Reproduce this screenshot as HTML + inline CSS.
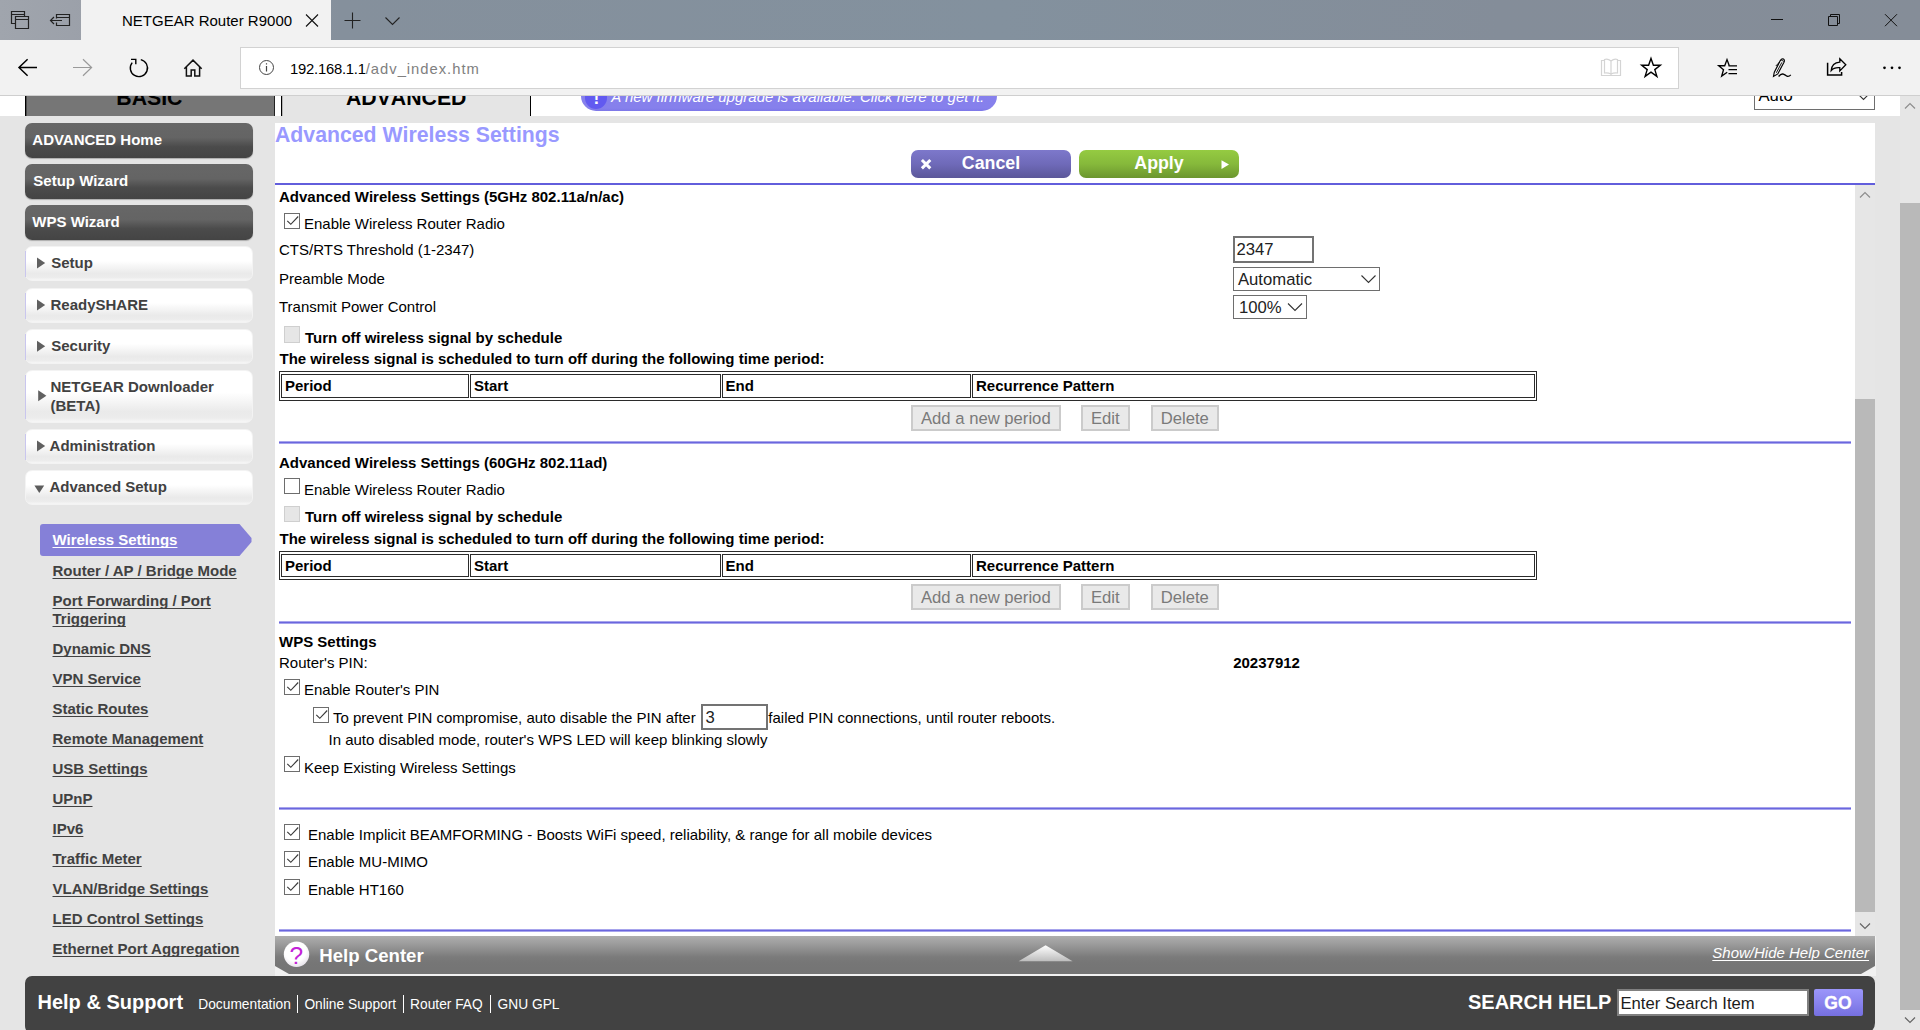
<!DOCTYPE html>
<html lang="en"><head><meta charset="utf-8"><title>NETGEAR Router R9000</title>
<style>
html,body{margin:0;padding:0}
body{width:1920px;height:1030px;overflow:hidden;position:relative;background:#e5e5e5;font-family:"Liberation Sans",sans-serif;}
div{box-sizing:border-box}
svg{position:absolute;left:0;top:0;overflow:visible}
.u{text-decoration:underline;text-decoration-skip-ink:none;text-underline-offset:2.4px;text-decoration-thickness:1.3px}
</style></head><body>

<div style="position:absolute;left:0px;top:0px;width:1920px;height:40px;background:linear-gradient(90deg,#a0a5ad 0,#9ba0a9 90px,#85909c 340px,#83919e 1000px,#848d99 1500px,#858d98 1920px)"></div>
<div style="position:absolute;left:81px;top:0px;width:250px;height:40px;background:#f2f2f2"></div>
<div style="position:absolute;left:122px;top:11px;font-size:15px;line-height:20px;font-weight:normal;color:#000;white-space:nowrap;">NETGEAR Router R9000</div>
<div style="position:absolute;left:0px;top:40px;width:1920px;height:56px;background:#f2f2f2"></div>
<div style="position:absolute;left:0px;top:95px;width:1920px;height:1px;background:#cfcfcf"></div>
<div style="position:absolute;left:240px;top:47px;width:1439px;height:42px;background:#fff;border:1px solid #d2d2d2"></div>
<div style="position:absolute;left:290px;top:60px;font-size:14.8px;line-height:19px;font-weight:normal;color:#000;white-space:nowrap;"><span style="color:#000;letter-spacing:-0.22px">192.168.1.1</span><span style="color:#808080;letter-spacing:0.98px">/adv_index.htm</span></div>
<svg width="1920" height="96" viewBox="0 0 1920 96" fill="none" stroke="#1a1a1a" stroke-width="1.2">
<!-- tabs aside -->
<g stroke="#222" stroke-width="1.2">
<path d="M15.5 23.5H11.5V11.5H24.5V16.5M11.5 14.5H24.5"/>
<path d="M15.5 16.5H28.5V28.5H15.5ZM15.5 19.5H28.5"/>
<path d="M56.5 18.5V14.5H69.5V25.5H56.5V22.5M56.5 17.5H69.5"/>
<path d="M62 20.5H50.5M54 17L50.5 20.5L54 24"/>
</g>
<!-- tab close, plus, chevron -->
<path d="M306 14.5L318 26.5M318 14.5L306 26.5" stroke="#111" stroke-width="1.1"/>
<path d="M344.5 20.5H360.5M352.5 12.5V28.5" stroke="#222" stroke-width="1.1"/>
<path d="M385.5 17.5L392.5 24.5L399.5 17.5" stroke="#222" stroke-width="1.1"/>
<!-- window controls -->
<path d="M1771 19.5H1783" stroke="#111" stroke-width="1"/>
<path d="M1828.5 16.5H1837.5V25.5H1828.5ZM1830.5 16.5V14.5H1839.5V23.5H1837.5" stroke="#111" stroke-width="1"/>
<path d="M1885 14.2L1897 26.2M1897 14.2L1885 26.2" stroke="#111" stroke-width="1"/>
<!-- back -->
<path d="M37 67.5H19M27.6 59.2L19 67.5L27.6 75.8" stroke="#000" stroke-width="1.5"/>
<!-- forward -->
<path d="M73 67.5H91.5M83 59.2L91.6 67.5L83 75.8" stroke="#9a9a9a" stroke-width="1.2"/>
<!-- refresh -->
<path d="M140.8 59.6A8.6 8.6 0 1 1 132.2 62.6" stroke="#000" stroke-width="1.4"/>
<path d="M131 59.4H135.8V64.2" stroke="#000" stroke-width="1.4"/>
<!-- home -->
<path d="M184.3 68.7L193 60.1L201.7 68.7M186.4 67V76H191.2V70H194.8V76H199.6V67" stroke="#111" stroke-width="1.5"/>
<!-- info -->
<circle cx="266.5" cy="67.5" r="7" stroke="#444" stroke-width="1"/>
<path d="M266.5 66V71.5M266.5 63.2V64.6" stroke="#444" stroke-width="1.2"/>
<!-- reading view (disabled) -->
<path d="M1604.5 60.5H1601.5V75.5H1620.5V60.5H1617.5M1611 61V75.5M1604.500 73V59.500Q1608 58.500 1611 61Q1614 58.500 1617.500 59.500V73Q1614 72.500 1611 74Q1608 72.500 1604.500 73Z" stroke="#d4d4d4" stroke-width="1.2"/>
<!-- star -->
<path d="M1651 58.4L1653.400 65.300H1660.300L1654.800 69.600L1656.900 76.400L1651 72.200L1645.100 76.400L1647.200 69.600L1641.700 65.300H1648.600Z" stroke="#000" stroke-width="1.4"/>
<!-- favorites hub -->
<path d="M1729.300 65.700L1727 59.600L1724.700 65.700H1718.700L1723.500 69.700L1721.700 76L1727.200 72.200" stroke="#000" stroke-width="1.35"/>
<path d="M1728.500 65.800H1737M1728.500 69.700H1737M1728.500 73.600H1737" stroke="#000" stroke-width="1.3"/>
<!-- pen -->
<path d="M1773.500 76.400L1774.300 72.200L1780.300 60.600Q1781.700 58.200 1783.500 59.100Q1785 60.100 1784 62.200L1777.800 73.900Z" stroke="#000" stroke-width="1.15"/>
<path d="M1779.600 62L1775.800 66M1781.900 62.300L1776.300 72.800M1781.200 60L1783.800 61.400" stroke="#000" stroke-width="0.9"/>
<path d="M1778.600 76.500Q1781.200 73.300 1783.400 74.200Q1785.500 75.300 1787 76.200Q1789 76.800 1790.800 74.900" stroke="#000" stroke-width="1.3"/>
<!-- share -->
<path d="M1827.600 62.800V75H1841.600V72" stroke="#000" stroke-width="1.5"/>
<path d="M1839.800 58.800L1845.800 64.800L1839.800 70.900V67.700Q1834 67.200 1831.200 70.600Q1831.800 62.800 1839.800 62.200Z" stroke="#000" stroke-width="1.3"/>
<!-- more -->
<g fill="#000" stroke="none"><circle cx="1884.500" cy="67.800" r="1.350"/><circle cx="1892" cy="67.800" r="1.350"/><circle cx="1899.500" cy="67.800" r="1.350"/></g>
</svg>
<div style="position:absolute;left:0px;top:96px;width:1900px;height:20px;background:#fff"></div>
<div style="position:absolute;left:25px;top:96px;width:250px;height:20px;background:#767676;border-left:1px solid #000;border-right:1px solid #222"></div>
<div style="position:absolute;left:26px;top:96px;width:1px;height:20px;background:#4c4c4c"></div>
<div style="position:absolute;left:0;top:96px;width:1900px;height:20px;overflow:hidden">
<div style="position:absolute;left:281px;top:0;width:250px;height:20px;background:#e5e5e5;border-left:1px solid #000;border-right:1px solid #000"></div><div style="position:absolute;left:282px;top:0;width:1px;height:20px;background:#b4b4b4"></div>
<div style="position:absolute;left:116.3px;top:-12px;font-size:21.25px;line-height:28px;font-weight:bold;color:#000;white-space:nowrap;font-kerning:none">BASIC</div>
<div style="position:absolute;left:346px;top:-12px;font-size:21.25px;line-height:28px;font-weight:bold;color:#000;white-space:nowrap;font-kerning:none">ADVANCED</div>
<div style="position:absolute;left:581px;top:-15px;width:416px;height:30px;border-radius:15px;background:linear-gradient(180deg,#8781ec 0,#8680ec 90%,#7d77e8 100%)"></div>
<div style="position:absolute;left:584.9px;top:-10.1px;width:22.6px;height:22.6px;border-radius:50%;background:#625af0"></div>
<div style="position:absolute;left:593.6px;top:-9px;font-size:17.5px;line-height:23px;font-weight:bold;color:#fff;white-space:nowrap;">!</div>
<div style="position:absolute;left:611.3px;top:-9px;font-size:15px;line-height:20px;font-weight:normal;color:#fff;white-space:nowrap;font-style:italic">A new firmware upgrade is available. Click here to get it.</div>
<div style="position:absolute;left:1754px;top:-10px;width:121px;height:24px;background:#fff;border:1px solid #6e6e6e"></div>
<div style="position:absolute;left:1758.5px;top:-11px;font-size:16.67px;line-height:22px;font-weight:normal;color:#000;white-space:nowrap;">Auto</div>
<svg width="1900" height="20" viewBox="0 96 1900 20" fill="none"><path d="M1856.500 92.500L1863.500 99.500L1870.500 92.500" stroke="#333" stroke-width="1.1"/></svg>
</div>
<div style="position:absolute;left:1900px;top:96px;width:20px;height:934px;background:#e6e6e6"></div>
<div style="position:absolute;left:1900px;top:203px;width:20px;height:807px;background:#b9b9b9"></div>
<svg width="1920" height="1030" viewBox="0 0 1920 1030" fill="none" stroke="#8e8e8e" stroke-width="1.2"><path d="M1905 108.500L1910 103.500L1915 108.500"/><path d="M1905 1017.500L1910 1022.500L1915 1017.500" stroke="#666"/></svg>
<div style="position:absolute;left:25px;top:123px;width:228px;height:35px;border-radius:7px;background:linear-gradient(180deg,#676767 0,#646464 42%,#4b4b4b 68%,#444 100%);box-shadow:0 1px 1px rgba(0,0,0,.25)"></div>
<div style="position:absolute;left:32.3px;top:130px;font-size:15px;line-height:20px;font-weight:bold;color:#fff;white-space:nowrap;">ADVANCED Home</div>
<div style="position:absolute;left:25px;top:164px;width:228px;height:35px;border-radius:7px;background:linear-gradient(180deg,#676767 0,#646464 42%,#4b4b4b 68%,#444 100%);box-shadow:0 1px 1px rgba(0,0,0,.25)"></div>
<div style="position:absolute;left:33.3px;top:171px;font-size:15px;line-height:20px;font-weight:bold;color:#fff;white-space:nowrap;">Setup Wizard</div>
<div style="position:absolute;left:25px;top:205px;width:228px;height:35px;border-radius:7px;background:linear-gradient(180deg,#676767 0,#646464 42%,#4b4b4b 68%,#444 100%);box-shadow:0 1px 1px rgba(0,0,0,.25)"></div>
<div style="position:absolute;left:32.3px;top:212px;font-size:15px;line-height:20px;font-weight:bold;color:#fff;white-space:nowrap;">WPS Wizard</div>
<div style="position:absolute;left:25px;top:246px;width:228px;height:35px;border-radius:7px;border:1px solid #f3f3f3;background:linear-gradient(180deg,#fff 0,#fff 42%,#eaeaea 80%,#ececec 92%,#f6f6f6 100%)"></div>
<div style="position:absolute;left:25px;top:251px;width:1px;height:26px;background:#c9c6ee"></div>
<div style="position:absolute;left:51.2px;top:253px;font-size:15px;line-height:20px;font-weight:bold;color:#414141;white-space:nowrap;">Setup</div>
<svg width="300" height="600" viewBox="0 0 300 600"><path d="M37 257.6L45.2 263.1L37 268.6Z" fill="#606060"/></svg>
<div style="position:absolute;left:25px;top:288px;width:228px;height:35px;border-radius:7px;border:1px solid #f3f3f3;background:linear-gradient(180deg,#fff 0,#fff 42%,#eaeaea 80%,#ececec 92%,#f6f6f6 100%)"></div>
<div style="position:absolute;left:25px;top:293px;width:1px;height:26px;background:#c9c6ee"></div>
<div style="position:absolute;left:50.5px;top:295px;font-size:15px;line-height:20px;font-weight:bold;color:#414141;white-space:nowrap;">ReadySHARE</div>
<svg width="300" height="600" viewBox="0 0 300 600"><path d="M37 299.5L45.2 305L37 310.5Z" fill="#606060"/></svg>
<div style="position:absolute;left:25px;top:329px;width:228px;height:35px;border-radius:7px;border:1px solid #f3f3f3;background:linear-gradient(180deg,#fff 0,#fff 42%,#eaeaea 80%,#ececec 92%,#f6f6f6 100%)"></div>
<div style="position:absolute;left:25px;top:334px;width:1px;height:26px;background:#c9c6ee"></div>
<div style="position:absolute;left:51.2px;top:336px;font-size:15px;line-height:20px;font-weight:bold;color:#414141;white-space:nowrap;">Security</div>
<svg width="300" height="600" viewBox="0 0 300 600"><path d="M37 340.7L45.2 346.2L37 351.7Z" fill="#606060"/></svg>
<div style="position:absolute;left:25px;top:370px;width:228px;height:53px;border-radius:7px;border:1px solid #f3f3f3;background:linear-gradient(180deg,#fff 0,#fff 42%,#eaeaea 80%,#ececec 92%,#f6f6f6 100%)"></div>
<div style="position:absolute;left:25px;top:375px;width:1px;height:44px;background:#c9c6ee"></div>
<div style="position:absolute;left:50.5px;top:377px;font-size:15px;line-height:20px;font-weight:bold;color:#414141;white-space:nowrap;">NETGEAR Downloader</div>
<div style="position:absolute;left:50.5px;top:396px;font-size:15px;line-height:20px;font-weight:bold;color:#414141;white-space:nowrap;">(BETA)</div>
<svg width="300" height="600" viewBox="0 0 300 600"><path d="M38.2 390.2L46.400000000000006 395.7L38.2 401.2Z" fill="#606060"/></svg>
<div style="position:absolute;left:25px;top:429px;width:228px;height:35px;border-radius:7px;border:1px solid #f3f3f3;background:linear-gradient(180deg,#fff 0,#fff 42%,#eaeaea 80%,#ececec 92%,#f6f6f6 100%)"></div>
<div style="position:absolute;left:25px;top:434px;width:1px;height:26px;background:#c9c6ee"></div>
<div style="position:absolute;left:49.6px;top:436px;font-size:15px;line-height:20px;font-weight:bold;color:#414141;white-space:nowrap;">Administration</div>
<svg width="300" height="600" viewBox="0 0 300 600"><path d="M37 440.5L45.2 446L37 451.5Z" fill="#606060"/></svg>
<div style="position:absolute;left:25px;top:470px;width:228px;height:35px;border-radius:7px;border:1px solid #f3f3f3;background:linear-gradient(180deg,#fff 0,#fff 42%,#eaeaea 80%,#ececec 92%,#f6f6f6 100%)"></div>
<div style="position:absolute;left:49.4px;top:477px;font-size:15px;line-height:20px;font-weight:bold;color:#414141;white-space:nowrap;">Advanced Setup</div>
<svg width="300" height="600" viewBox="0 0 300 600"><path d="M34.4 485.4H44.2L39.3 493Z" fill="#5c5c5c"/></svg>
<svg width="300" height="600" viewBox="0 0 300 600"><path d="M43 524H239.500L251.500 538V542L239.500 556H43Q40 556 40 553V527Q40 524 43 524Z" fill="#8580d8"/></svg>
<div class="u" style="position:absolute;left:52.5px;top:530px;font-size:15px;line-height:20px;font-weight:bold;color:#fff;white-space:nowrap;">Wireless Settings</div>
<div class="u" style="position:absolute;left:52.5px;top:561px;font-size:15px;line-height:20px;font-weight:bold;color:#414141;white-space:nowrap;">Router / AP / Bridge Mode</div>
<div class="u" style="position:absolute;left:52.5px;top:591px;font-size:15px;line-height:20px;font-weight:bold;color:#414141;white-space:nowrap;">Port Forwarding / Port</div>
<div class="u" style="position:absolute;left:52.5px;top:609px;font-size:15px;line-height:20px;font-weight:bold;color:#414141;white-space:nowrap;">Triggering</div>
<div class="u" style="position:absolute;left:52.5px;top:639px;font-size:15px;line-height:20px;font-weight:bold;color:#414141;white-space:nowrap;">Dynamic DNS</div>
<div class="u" style="position:absolute;left:52.5px;top:669px;font-size:15px;line-height:20px;font-weight:bold;color:#414141;white-space:nowrap;">VPN Service</div>
<div class="u" style="position:absolute;left:52.5px;top:699px;font-size:15px;line-height:20px;font-weight:bold;color:#414141;white-space:nowrap;">Static Routes</div>
<div class="u" style="position:absolute;left:52.5px;top:729px;font-size:15px;line-height:20px;font-weight:bold;color:#414141;white-space:nowrap;">Remote Management</div>
<div class="u" style="position:absolute;left:52.5px;top:759px;font-size:15px;line-height:20px;font-weight:bold;color:#414141;white-space:nowrap;">USB Settings</div>
<div class="u" style="position:absolute;left:52.5px;top:789px;font-size:15px;line-height:20px;font-weight:bold;color:#414141;white-space:nowrap;">UPnP</div>
<div class="u" style="position:absolute;left:52.5px;top:819px;font-size:15px;line-height:20px;font-weight:bold;color:#414141;white-space:nowrap;">IPv6</div>
<div class="u" style="position:absolute;left:52.5px;top:849px;font-size:15px;line-height:20px;font-weight:bold;color:#414141;white-space:nowrap;">Traffic Meter</div>
<div class="u" style="position:absolute;left:52.5px;top:879px;font-size:15px;line-height:20px;font-weight:bold;color:#414141;white-space:nowrap;">VLAN/Bridge Settings</div>
<div class="u" style="position:absolute;left:52.5px;top:909px;font-size:15px;line-height:20px;font-weight:bold;color:#414141;white-space:nowrap;">LED Control Settings</div>
<div class="u" style="position:absolute;left:52.5px;top:939px;font-size:15px;line-height:20px;font-weight:bold;color:#414141;white-space:nowrap;">Ethernet Port Aggregation</div>
<div style="position:absolute;left:275px;top:123px;width:1600px;height:813px;background:#fff"></div>
<div style="position:absolute;left:275px;top:121px;font-size:21.25px;line-height:28px;font-weight:bold;color:#9999ff;white-space:nowrap;font-kerning:none">Advanced Wireless Settings</div>
<div style="position:absolute;left:911px;top:150px;width:160px;height:28px;border-radius:7px;background:linear-gradient(180deg,#7d78cb 0,#6f6ab9 50%,#5b5799 100%)"></div>
<div style="position:absolute;left:961.8px;top:152px;font-size:17.8px;line-height:23px;font-weight:bold;color:#fff;white-space:nowrap;">Cancel</div>
<div style="position:absolute;left:1079px;top:150px;width:160px;height:28px;border-radius:7px;background:linear-gradient(180deg,#95cb42 0,#86b93b 50%,#6b962e 100%)"></div>
<div style="position:absolute;left:1134.3px;top:152px;font-size:17.8px;line-height:23px;font-weight:bold;color:#fff;white-space:nowrap;">Apply</div>
<svg width="1920" height="300" viewBox="0 0 1920 300"><path d="M921.900 160L930.300 168.400M930.300 160L921.900 168.400" stroke="#fff" stroke-width="3"/><path d="M1221.500 160.200L1229 164.600L1221.500 169Z" fill="#fff"/></svg>
<div style="position:absolute;left:275px;top:183px;width:1600px;height:2px;background:#625edc"></div>
<div style="position:absolute;left:1855px;top:185px;width:20px;height:751px;background:#e6e6e6"></div>
<div style="position:absolute;left:1855px;top:399px;width:20px;height:513px;background:#b9b9b9"></div>
<svg width="1920" height="1030" viewBox="0 0 1920 1030" fill="none" stroke="#8e8e8e" stroke-width="1.2"><path d="M1860 197.500L1865 192.500L1870 197.500"/><path d="M1860 923.500L1865 928.500L1870 923.500" stroke="#666"/></svg>
<div style="position:absolute;left:279px;top:187px;font-size:15px;line-height:20px;font-weight:bold;color:#000;white-space:nowrap;">Advanced Wireless Settings (5GHz 802.11a/n/ac)</div>
<div style="position:absolute;left:284px;top:213px;width:16px;height:16px;background:#fff;border:1px solid #6d6d6d"></div>
<svg width="1920" height="1030" viewBox="0 0 1920 1030" fill="none"><path d="M287.3 220.8L290.8 224.3L298.2 216.5" stroke="#3a3a3a" stroke-width="1.15"/></svg>
<div style="position:absolute;left:304px;top:214px;font-size:15px;line-height:20px;font-weight:normal;color:#000;white-space:nowrap;">Enable Wireless Router Radio</div>
<div style="position:absolute;left:279px;top:240px;font-size:15px;line-height:20px;font-weight:normal;color:#000;white-space:nowrap;">CTS/RTS Threshold (1-2347)</div>
<div style="position:absolute;left:1233px;top:236px;width:81px;height:27px;background:#fff;border:2px solid #737373"></div>
<div style="position:absolute;left:1236.5px;top:239px;font-size:16.67px;line-height:22px;font-weight:normal;color:#222;white-space:nowrap;">2347</div>
<div style="position:absolute;left:279px;top:269px;font-size:15px;line-height:20px;font-weight:normal;color:#000;white-space:nowrap;">Preamble Mode</div>
<div style="position:absolute;left:1233px;top:267px;width:147px;height:24px;background:#fff;border:1px solid #6e6e6e"></div>
<div style="position:absolute;left:1238px;top:269px;font-size:16.67px;line-height:22px;font-weight:normal;color:#222;white-space:nowrap;">Automatic</div>
<div style="position:absolute;left:279px;top:297px;font-size:15px;line-height:20px;font-weight:normal;color:#000;white-space:nowrap;">Transmit Power Control</div>
<div style="position:absolute;left:1233px;top:295px;width:74px;height:24px;background:#fff;border:1px solid #6e6e6e"></div>
<div style="position:absolute;left:1239px;top:297px;font-size:16.67px;line-height:22px;font-weight:normal;color:#222;white-space:nowrap;">100%</div>
<svg width="1920" height="400" viewBox="0 0 1920 400" fill="none" stroke="#333" stroke-width="1.1"><path d="M1361.500 275.500L1368.500 282.500L1375.500 275.500"/><path d="M1288 303.500L1295 310.500L1302 303.500"/></svg>
<div style="position:absolute;left:284px;top:326px;width:16px;height:17px;background:#e6e6e6;border:1px solid #cfcfcf"></div>
<div style="position:absolute;left:305px;top:328px;font-size:15px;line-height:20px;font-weight:bold;color:#000;white-space:nowrap;">Turn off wireless signal by schedule</div>
<div style="position:absolute;left:279.5px;top:349px;font-size:15px;line-height:20px;font-weight:bold;color:#000;white-space:nowrap;">The wireless signal is scheduled to turn off during the following time period:</div>
<div style="position:absolute;left:279px;top:371px;width:1258px;height:30px;border:1px solid #2b2b2b"></div>
<div style="position:absolute;left:281px;top:374px;width:188px;height:24px;border:1px solid #2b2b2b"></div>
<div style="position:absolute;left:285px;top:376px;font-size:15px;line-height:20px;font-weight:bold;color:#000;white-space:nowrap;">Period</div>
<div style="position:absolute;left:470px;top:374px;width:250.5px;height:24px;border:1px solid #2b2b2b"></div>
<div style="position:absolute;left:474px;top:376px;font-size:15px;line-height:20px;font-weight:bold;color:#000;white-space:nowrap;">Start</div>
<div style="position:absolute;left:721.5px;top:374px;width:249.5px;height:24px;border:1px solid #2b2b2b"></div>
<div style="position:absolute;left:725.5px;top:376px;font-size:15px;line-height:20px;font-weight:bold;color:#000;white-space:nowrap;">End</div>
<div style="position:absolute;left:972px;top:374px;width:562.5px;height:24px;border:1px solid #2b2b2b"></div>
<div style="position:absolute;left:976px;top:376px;font-size:15px;line-height:20px;font-weight:bold;color:#000;white-space:nowrap;">Recurrence Pattern</div>
<div style="position:absolute;left:911px;top:405px;width:150px;height:26px;background:#e9e9e9;border:2px solid #cbcbcb"></div>
<div style="position:absolute;left:921px;top:408px;font-size:16.67px;line-height:22px;font-weight:normal;color:#7a7a7a;white-space:nowrap;">Add a new period</div>
<div style="position:absolute;left:1081px;top:405px;width:49px;height:26px;background:#e9e9e9;border:2px solid #cbcbcb"></div>
<div style="position:absolute;left:1091px;top:408px;font-size:16.67px;line-height:22px;font-weight:normal;color:#7a7a7a;white-space:nowrap;">Edit</div>
<div style="position:absolute;left:1151px;top:405px;width:68px;height:26px;background:#e9e9e9;border:2px solid #cbcbcb"></div>
<div style="position:absolute;left:1160.7px;top:408px;font-size:16.67px;line-height:22px;font-weight:normal;color:#7a7a7a;white-space:nowrap;">Delete</div>
<div style="position:absolute;left:279px;top:441px;width:1572px;height:3px;background:#6a66de;border-top:1px solid #a7a4ec;border-bottom:1px solid #a7a4ec"></div>
<div style="position:absolute;left:279px;top:453px;font-size:15px;line-height:20px;font-weight:bold;color:#000;white-space:nowrap;">Advanced Wireless Settings (60GHz 802.11ad)</div>
<div style="position:absolute;left:284px;top:478px;width:16px;height:16px;background:#fff;border:1px solid #6d6d6d"></div>
<div style="position:absolute;left:304px;top:480px;font-size:15px;line-height:20px;font-weight:normal;color:#000;white-space:nowrap;">Enable Wireless Router Radio</div>
<div style="position:absolute;left:284px;top:506px;width:16px;height:16px;background:#e6e6e6;border:1px solid #cfcfcf"></div>
<div style="position:absolute;left:305px;top:507px;font-size:15px;line-height:20px;font-weight:bold;color:#000;white-space:nowrap;">Turn off wireless signal by schedule</div>
<div style="position:absolute;left:279.5px;top:529px;font-size:15px;line-height:20px;font-weight:bold;color:#000;white-space:nowrap;">The wireless signal is scheduled to turn off during the following time period:</div>
<div style="position:absolute;left:279px;top:551px;width:1258px;height:29px;border:1px solid #2b2b2b"></div>
<div style="position:absolute;left:281px;top:554px;width:188px;height:23px;border:1px solid #2b2b2b"></div>
<div style="position:absolute;left:285px;top:556px;font-size:15px;line-height:20px;font-weight:bold;color:#000;white-space:nowrap;">Period</div>
<div style="position:absolute;left:470px;top:554px;width:250.5px;height:23px;border:1px solid #2b2b2b"></div>
<div style="position:absolute;left:474px;top:556px;font-size:15px;line-height:20px;font-weight:bold;color:#000;white-space:nowrap;">Start</div>
<div style="position:absolute;left:721.5px;top:554px;width:249.5px;height:23px;border:1px solid #2b2b2b"></div>
<div style="position:absolute;left:725.5px;top:556px;font-size:15px;line-height:20px;font-weight:bold;color:#000;white-space:nowrap;">End</div>
<div style="position:absolute;left:972px;top:554px;width:562.5px;height:23px;border:1px solid #2b2b2b"></div>
<div style="position:absolute;left:976px;top:556px;font-size:15px;line-height:20px;font-weight:bold;color:#000;white-space:nowrap;">Recurrence Pattern</div>
<div style="position:absolute;left:911px;top:584px;width:150px;height:26px;background:#e9e9e9;border:2px solid #cbcbcb"></div>
<div style="position:absolute;left:921px;top:587px;font-size:16.67px;line-height:22px;font-weight:normal;color:#7a7a7a;white-space:nowrap;">Add a new period</div>
<div style="position:absolute;left:1081px;top:584px;width:49px;height:26px;background:#e9e9e9;border:2px solid #cbcbcb"></div>
<div style="position:absolute;left:1091px;top:587px;font-size:16.67px;line-height:22px;font-weight:normal;color:#7a7a7a;white-space:nowrap;">Edit</div>
<div style="position:absolute;left:1151px;top:584px;width:68px;height:26px;background:#e9e9e9;border:2px solid #cbcbcb"></div>
<div style="position:absolute;left:1160.7px;top:587px;font-size:16.67px;line-height:22px;font-weight:normal;color:#7a7a7a;white-space:nowrap;">Delete</div>
<div style="position:absolute;left:279px;top:621px;width:1572px;height:3px;background:#6a66de;border-top:1px solid #a7a4ec;border-bottom:1px solid #a7a4ec"></div>
<div style="position:absolute;left:279px;top:632px;font-size:15px;line-height:20px;font-weight:bold;color:#000;white-space:nowrap;">WPS Settings</div>
<div style="position:absolute;left:279px;top:653px;font-size:15px;line-height:20px;font-weight:normal;color:#000;white-space:nowrap;">Router&#x27;s PIN:</div>
<div style="position:absolute;left:1233.2px;top:653px;font-size:15px;line-height:20px;font-weight:bold;color:#000;white-space:nowrap;">20237912</div>
<div style="position:absolute;left:284px;top:679px;width:16px;height:16px;background:#fff;border:1px solid #6d6d6d"></div>
<svg width="1920" height="1030" viewBox="0 0 1920 1030" fill="none"><path d="M287.3 686.8L290.8 690.3L298.2 682.5" stroke="#3a3a3a" stroke-width="1.15"/></svg>
<div style="position:absolute;left:304px;top:680px;font-size:15px;line-height:20px;font-weight:normal;color:#000;white-space:nowrap;">Enable Router&#x27;s PIN</div>
<div style="position:absolute;left:313px;top:707px;width:16px;height:16px;background:#fff;border:1px solid #6d6d6d"></div>
<svg width="1920" height="1030" viewBox="0 0 1920 1030" fill="none"><path d="M316.3 714.8L319.8 718.3L327.2 710.5" stroke="#3a3a3a" stroke-width="1.15"/></svg>
<div style="position:absolute;left:333px;top:708px;font-size:15px;line-height:20px;font-weight:normal;color:#000;white-space:nowrap;">To prevent PIN compromise, auto disable the PIN after</div>
<div style="position:absolute;left:701px;top:704px;width:67px;height:26px;background:#fff;border:2px solid #737373"></div>
<div style="position:absolute;left:705.5px;top:707px;font-size:16.67px;line-height:22px;font-weight:normal;color:#222;white-space:nowrap;">3</div>
<div style="position:absolute;left:768.3px;top:708px;font-size:15px;line-height:20px;font-weight:normal;color:#000;white-space:nowrap;">failed PIN connections, until router reboots.</div>
<div style="position:absolute;left:328.5px;top:730px;font-size:15px;line-height:20px;font-weight:normal;color:#000;white-space:nowrap;">In auto disabled mode, router&#x27;s WPS LED will keep blinking slowly</div>
<div style="position:absolute;left:284px;top:756px;width:16px;height:16px;background:#fff;border:1px solid #6d6d6d"></div>
<svg width="1920" height="1030" viewBox="0 0 1920 1030" fill="none"><path d="M287.3 763.8L290.8 767.3L298.2 759.5" stroke="#3a3a3a" stroke-width="1.15"/></svg>
<div style="position:absolute;left:304px;top:758px;font-size:15px;line-height:20px;font-weight:normal;color:#000;white-space:nowrap;">Keep Existing Wireless Settings</div>
<div style="position:absolute;left:279px;top:807px;width:1572px;height:3px;background:#6a66de;border-top:1px solid #a7a4ec;border-bottom:1px solid #a7a4ec"></div>
<div style="position:absolute;left:284px;top:824px;width:16px;height:16px;background:#fff;border:1px solid #6d6d6d"></div>
<svg width="1920" height="1030" viewBox="0 0 1920 1030" fill="none"><path d="M287.3 831.8L290.8 835.3L298.2 827.5" stroke="#3a3a3a" stroke-width="1.15"/></svg>
<div style="position:absolute;left:308px;top:825px;font-size:15px;line-height:20px;font-weight:normal;color:#000;white-space:nowrap;">Enable Implicit BEAMFORMING - Boosts WiFi speed, reliability, &amp; range for all mobile devices</div>
<div style="position:absolute;left:284px;top:851px;width:16px;height:16px;background:#fff;border:1px solid #6d6d6d"></div>
<svg width="1920" height="1030" viewBox="0 0 1920 1030" fill="none"><path d="M287.3 858.8L290.8 862.3L298.2 854.5" stroke="#3a3a3a" stroke-width="1.15"/></svg>
<div style="position:absolute;left:308px;top:852px;font-size:15px;line-height:20px;font-weight:normal;color:#000;white-space:nowrap;">Enable MU-MIMO</div>
<div style="position:absolute;left:284px;top:879px;width:16px;height:16px;background:#fff;border:1px solid #6d6d6d"></div>
<svg width="1920" height="1030" viewBox="0 0 1920 1030" fill="none"><path d="M287.3 886.8L290.8 890.3L298.2 882.5" stroke="#3a3a3a" stroke-width="1.15"/></svg>
<div style="position:absolute;left:308px;top:880px;font-size:15px;line-height:20px;font-weight:normal;color:#000;white-space:nowrap;">Enable HT160</div>
<div style="position:absolute;left:279px;top:929px;width:1572px;height:3px;background:#6a66de;border-top:1px solid #a7a4ec;border-bottom:1px solid #a7a4ec"></div>
<svg width="1920" height="1030" viewBox="0 0 1920 1030"><defs><linearGradient id="hg" x1="0" y1="0" x2="0" y2="1"><stop offset="0" stop-color="#aeaeae"/><stop offset="0.22" stop-color="#9b9b9b"/><stop offset="0.55" stop-color="#7b7b7b"/><stop offset="0.7" stop-color="#767676"/><stop offset="1" stop-color="#747474"/></linearGradient><linearGradient id="tg" x1="0" y1="0" x2="0" y2="1"><stop offset="0" stop-color="#fff"/><stop offset="1" stop-color="#bdbdbd"/></linearGradient><radialGradient id="qg" cx="0.45" cy="0.35" r="0.7"><stop offset="0.6" stop-color="#fff"/><stop offset="1" stop-color="#e2dde6"/></radialGradient></defs><rect x="275" y="936" width="1601" height="40" fill="#f1f1f1"/><path d="M275 936H1875V966L1861 974H289L275 966Z" fill="url(#hg)"/><path d="M1045.600 945.300L1072.600 961.200H1018.600Z" fill="url(#tg)"/><circle cx="296.500" cy="954.300" r="12.700" fill="url(#qg)"/></svg>
<div style="position:absolute;left:289.4px;top:940px;font-size:24.5px;line-height:32px;font-weight:normal;color:#c322d8;white-space:nowrap;">?</div>
<div style="position:absolute;left:319.3px;top:944px;font-size:18.6px;line-height:24px;font-weight:bold;color:#fff;white-space:nowrap;">Help Center</div>
<div style="position:absolute;left:1712.3px;top:943px;font-size:15px;line-height:20px;font-weight:normal;color:#fff;white-space:nowrap;font-style:italic;text-decoration:underline;text-decoration-skip-ink:none;text-underline-offset:2.4px">Show/Hide Help Center</div>
<div style="position:absolute;left:25px;top:976px;width:1850px;height:58px;background:#424242;border-radius:7px 7px 11px 8px"></div>
<div style="position:absolute;left:37.5px;top:989px;font-size:20px;line-height:26px;font-weight:bold;color:#fff;white-space:nowrap;">Help &amp; Support</div>
<div style="position:absolute;left:198.29999999999998px;top:996px;font-size:13.75px;line-height:18px;font-weight:normal;color:#fff;white-space:nowrap;">Documentation</div>
<div style="position:absolute;left:304.4px;top:996px;font-size:13.75px;line-height:18px;font-weight:normal;color:#fff;white-space:nowrap;">Online Support</div>
<div style="position:absolute;left:410.09999999999997px;top:996px;font-size:13.75px;line-height:18px;font-weight:normal;color:#fff;white-space:nowrap;">Router FAQ</div>
<div style="position:absolute;left:497.59999999999997px;top:996px;font-size:13.75px;line-height:18px;font-weight:normal;color:#fff;white-space:nowrap;">GNU GPL</div>
<div style="position:absolute;left:297.3px;top:995px;width:1px;height:18px;background:#fff"></div>
<div style="position:absolute;left:402.7px;top:995px;width:1px;height:18px;background:#fff"></div>
<div style="position:absolute;left:490.3px;top:995px;width:1px;height:18px;background:#fff"></div>
<div style="position:absolute;left:1468px;top:989px;font-size:20px;line-height:26px;font-weight:bold;color:#fff;white-space:nowrap;">SEARCH HELP</div>
<div style="position:absolute;left:1617px;top:989px;width:192px;height:27px;background:#fff;border:2px solid #808080"></div>
<div style="position:absolute;left:1620.5px;top:993px;font-size:16.67px;line-height:22px;font-weight:normal;color:#1c1c1c;white-space:nowrap;">Enter Search Item</div>
<div style="position:absolute;left:1814px;top:989px;width:49px;height:27px;border-radius:2px;background:linear-gradient(180deg,#9b96fa 0,#8a84ee 50%,#756fe0 100%)"></div>
<div style="position:absolute;left:1824.3px;top:992px;font-size:17.5px;line-height:23px;font-weight:bold;color:#fff;white-space:nowrap;-webkit-text-stroke:.35px #fff">GO</div>
</body></html>
